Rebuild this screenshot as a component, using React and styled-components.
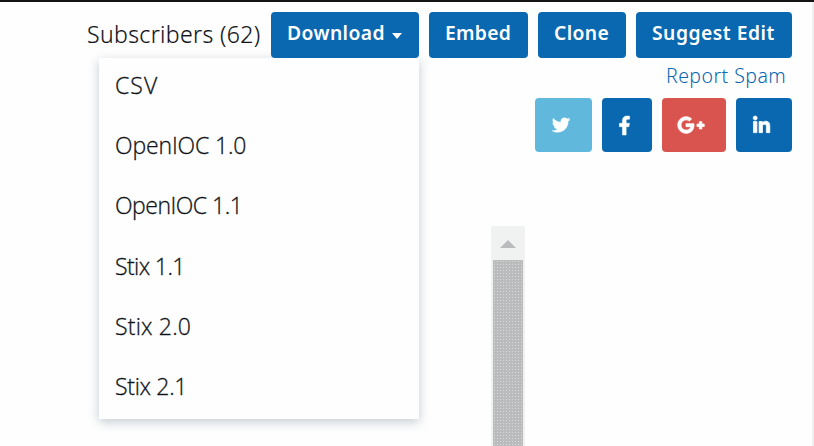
import React from "react";
import styled, { createGlobalStyle } from "styled-components";
import { FaTwitter, FaFacebookF, FaGooglePlusG, FaLinkedinIn } from "react-icons/fa";

const GlobalStyle = createGlobalStyle`
  *, *::before, *::after { box-sizing: border-box; }
  body {
    margin: 0;
    background: #fefefe;
    font-family: "Noto Sans", "Open Sans", sans-serif;
  }
`;

const Page = styled.main`
  width: 814px;
  height: 446px;
  overflow: hidden;
  border-top: 2px solid #141414;
`;

const Content = styled.div`
  height: 444px;
  padding: 10px 20px 0 87px;
  border-right: 2px solid #f0f0f1;
`;

const Toolbar = styled.header`
  display: flex;
  gap: 10px;
  height: 46px;
`;

const Subscribers = styled.span`
  width: 174px;
  font-size: 23px;
  font-weight: 350;
  line-height: 45px;
  letter-spacing: ${(p) => p.$spacing}px;
  white-space: nowrap;
  color: #101318;
  -webkit-text-stroke: 0.15px currentColor;
`;

const Dropdown = styled.div`
  position: relative;
`;

const Button = styled.button`
  display: flex;
  align-items: center;
  width: ${(p) => p.$width}px;
  height: 46px;
  padding: 0 0 5px 16px;
  border: 0;
  border-radius: 4px;
  background: #0968b0;
  color: #fff;
  font-family: inherit;
  font-size: 19.3px;
  font-weight: 600;
  line-height: 26px;
  letter-spacing: ${(p) => p.$spacing}px;
  white-space: nowrap;
`;

const Caret = styled.span`
  margin: 6px 0 0 7px;
  border: 5.5px solid transparent;
  border-top: 6px solid #fff;
  border-bottom: 0;
`;

const Menu = styled.ul`
  position: absolute;
  top: 46px;
  right: 0;
  z-index: -1;
  width: 320px;
  height: 361px;
  margin: 0;
  padding: 0 16px;
  list-style: none;
  background: #fefefe;
  box-shadow: 0 3px 10px rgba(60, 85, 105, 0.3);
`;

const MenuItem = styled.li`
  height: 60.2px;
  font-family: "Open Sans", "Noto Sans", sans-serif;
  font-size: 23px;
  font-weight: 350;
  line-height: 55px;
  letter-spacing: ${(p) => p.$spacing}px;
  white-space: nowrap;
  color: #101318;
  -webkit-text-stroke: 0.3px currentColor;
`;

const SpamLink = styled.a`
  display: block;
  width: 126px;
  height: 40px;
  margin-left: auto;
  color: #0968b0;
  font-size: 19.5px;
  font-weight: 300;
  line-height: 36px;
  letter-spacing: ${(p) => p.$spacing}px;
  white-space: nowrap;
`;

const ShareRow = styled.nav`
  display: flex;
  justify-content: flex-end;
  gap: 10px;
`;

const ShareButton = styled.a`
  display: flex;
  align-items: center;
  width: ${(p) => p.$width}px;
  height: 54px;
  padding-left: ${(p) => p.$inset}px;
  border-radius: 4px;
  background: ${(p) => p.$color};
  color: #fff;

  svg {
    width: ${(p) => p.$icon[0]}px;
    height: ${(p) => p.$icon[1]}px;
    stroke: currentColor;
    stroke-width: ${(p) => p.$stroke};
    overflow: visible;
  }
`;

const Scrollbar = styled.div`
  display: flex;
  flex-direction: column;
  width: 34px;
  height: 220px;
  margin: 74px 0 0 404px;
  padding: 0 2px;
  background: #f0f2f2;
`;

const ScrollArrow = styled.div`
  display: flex;
  align-items: center;
  justify-content: center;
  height: 34px;
  padding-top: 2px;

  &::before {
    content: "";
    border: 8px solid transparent;
    border-top: 0;
    border-bottom: 8px solid #b9bbbd;
  }
`;

const ScrollThumb = styled.div`
  flex: 1;
  background-color: #b9bbbd;
  background-image: radial-gradient(circle, #d8dadb 0.6px, transparent 0.8px);
  background-size: 3px 3px;
`;

const formats = [
  { label: "CSV", spacing: 1.1 },
  { label: "OpenIOC 1.0", spacing: -0.15 },
  { label: "OpenIOC 1.1", spacing: -0.5 },
  { label: "Stix 1.1", spacing: -0.6 },
  { label: "Stix 2.0", spacing: 0.2 },
  { label: "Stix 2.1", spacing: -0.3 },
];

const networks = [
  { name: "Twitter", Icon: FaTwitter, width: 57, inset: 16.5, color: "#60b9dc", icon: [18, 18], stroke: 10 },
  { name: "Facebook", Icon: FaFacebookF, width: 50, inset: 16, color: "#0968b0", icon: [13, 19], stroke: 14 },
  { name: "Google Plus", Icon: FaGooglePlusG, width: 64, inset: 15, color: "#d9534f", icon: [28, 22], stroke: 20 },
  { name: "LinkedIn", Icon: FaLinkedinIn, width: 56, inset: 15.5, color: "#0968b0", icon: [19, 19], stroke: 20 },
];

export default function App() {
  return (
    <>
      <GlobalStyle />
      <Page>
        <Content>
          <Toolbar>
            <Subscribers $spacing={0.37}>Subscribers (62)</Subscribers>
            <Dropdown>
              <Button $width={148} $spacing={0.42}>
                Download
                <Caret />
              </Button>
              <Menu>
                {formats.map((f) => (
                  <MenuItem key={f.label} $spacing={f.spacing}>{f.label}</MenuItem>
                ))}
              </Menu>
            </Dropdown>
            <Button $width={99} $spacing={0.3}>Embed</Button>
            <Button $width={88} $spacing={0.4}>Clone</Button>
            <Button $width={156} $spacing={0.5}>Suggest Edit</Button>
          </Toolbar>
          <SpamLink $spacing={0.45}>Report Spam</SpamLink>
          <ShareRow>
            {networks.map(({ name, Icon, width, inset, color, icon, stroke }) => (
              <ShareButton
                key={name}
                aria-label={name}
                $width={width}
                $inset={inset}
                $color={color}
                $icon={icon}
                $stroke={stroke}
              >
                <Icon />
              </ShareButton>
            ))}
          </ShareRow>
          <Scrollbar>
            <ScrollArrow />
            <ScrollThumb />
          </Scrollbar>
        </Content>
      </Page>
    </>
  );
}
